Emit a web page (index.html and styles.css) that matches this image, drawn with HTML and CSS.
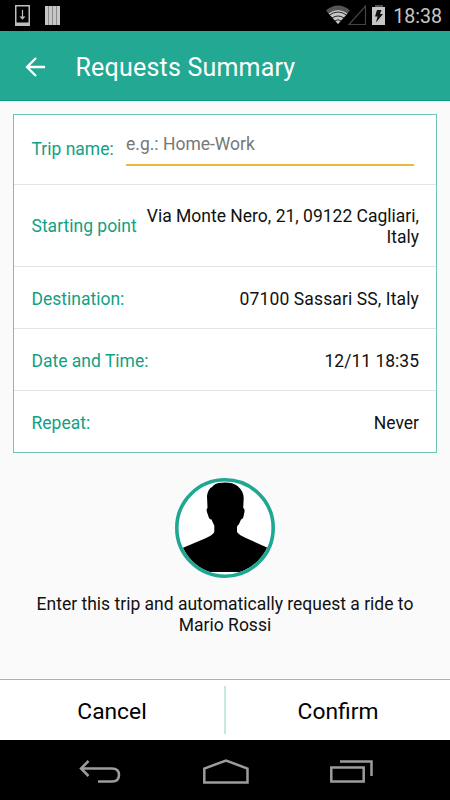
FILE: index.html
```
<!DOCTYPE html>
<html lang="en">
<head>
  <meta charset="UTF-8">
  <meta name="viewport" content="width=device-width, initial-scale=1.0">
  <title>Requests Summary</title>
  <link rel="stylesheet" href="styles.css">
</head>
<body>
  <div class="status_bar">
    <svg class="status_left" width="46" height="21" viewBox="0 0 46 21">
      <path d="M.75.75h13.5v19H.75z" fill="none" stroke="#bdbdbd" stroke-width="1.5"/>
      <path d="M0 17.500h15V21H0z" fill="#bdbdbd"/>
      <path d="M7.500 5v7" stroke="#bdbdbd" stroke-width="1.2"/>
      <path d="M4.500 11.500h6l-3 3.200z" fill="#bdbdbd"/>
      <path d="M30 1h15v19H30z" fill="#8a8a8a"/>
      <path d="M30 1h3v19h-3zM34 1h3v19h-3zM38 1h3v19h-3zM42 1h3v19h-3z" fill="#c6c6c6"/>
    </svg>
    <svg class="status_right" width="60" height="21" viewBox="0 0 60 21">
      <path d="M0 5.500Q12-4.500 24 5.500L12 19z" fill="#555"/>
      <path d="M2.500 8.500Q12 1.500 21.500 8.500L12 19z" fill="#c6c6c6"/>
      <path d="M3.500 10Q12 4 20.500 10M6 13Q12 9 18 13M8.500 16Q12 13.500 15.500 16" fill="none" stroke="#000" stroke-width=".8"/>
      <path d="M23 19.500L39.500 1v18.500z" fill="none" stroke="#444" stroke-width="1.200"/>
      <path d="M49 0h8v2h-8z" fill="#505050"/>
      <path d="M46 2h13v18H46z" fill="#c6c6c6"/>
      <path d="M51 5h4.500l-1.500 4h3l-7 8.500 1.500-6H49z" fill="#111"/>
    </svg>
    <span class="status_time">18:38</span>
  </div>

  <div class="header">
    <svg class="header_back" width="22" height="20" viewBox="0 0 22 20">
      <path d="M20 10H2M11 1L2 10l9 9" fill="none" stroke="#fff" stroke-width="2.300"/>
    </svg>
    <h1 class="header_title">Requests Summary</h1>
  </div>

  <div class="content">
    <div class="card">
      <div class="row row_name">
        <label class="row_label" for="trip">Trip name:</label>
        <input class="row_input" id="trip" type="text" placeholder="e.g.: Home-Work">
      </div>
      <div class="row row_start">
        <span class="row_label">Starting point</span>
        <span class="row_value">Via Monte Nero, 21, 09122 Cagliari, Italy</span>
      </div>
      <div class="row">
        <span class="row_label">Destination:</span>
        <span class="row_value row_value_wide">07100 Sassari SS, Italy</span>
      </div>
      <div class="row">
        <span class="row_label">Date and Time:</span>
        <span class="row_value">12/11 18:35</span>
      </div>
      <div class="row">
        <span class="row_label">Repeat:</span>
        <span class="row_value">Never</span>
      </div>
    </div>

    <svg class="avatar" width="100" height="100" viewBox="0 0 100 100">
      <clipPath id="circle"><circle cx="50" cy="50" r="46.500"/></clipPath>
      <circle cx="50" cy="50" r="48.200" fill="#fff"/>
      <path clip-path="url(#circle)" d="M0 94V73L8.700 69.500 30 60.500Q38 57 39.300 54V47.500Q38 45 36.500 41.500 34 41.500 33 37 30.500 31 32.500 30L32 18Q33 11 37 9 40 4.800 47 4.700 57 4 62.500 8 68.500 13 68.700 20L68.200 30Q70.500 31 69 36 68.500 41 66 41.500 64.500 46 62 48.500V54Q64 57 72 60.500L92 69.500 100 73V94z" fill="#000"/>
      <circle cx="50" cy="50" r="48.200" fill="none" stroke="#1fa792" stroke-width="3.600"/>
    </svg>
    <p class="message">Enter this trip and automatically request a ride to<br>Mario Rossi</p>
  </div>

  <div class="actions">
    <button class="actions_btn">Cancel</button>
    <div class="actions_divider"></div>
    <button class="actions_btn">Confirm</button>
  </div>

  <div class="nav_bar">
    <svg width="42" height="23" viewBox="0 0 42 23">
      <path d="M2 8.500h31q7 0 7 6.500t-7 6.500H19M9.500 1L2 8.500 9.500 16" fill="none" stroke="#9c9c9c" stroke-width="2.500"/>
    </svg>
    <svg width="46" height="25" viewBox="0 0 46 25">
      <path d="M1.300 23.500V9.500L23 1.500l21.500 8v14z" fill="none" stroke="#9c9c9c" stroke-width="2.500"/>
    </svg>
    <svg width="43" height="23" viewBox="0 0 43 23">
      <path d="M1.300 7.500h32.400v14H1.300zM10 1.500h31.500V16" fill="none" stroke="#9c9c9c" stroke-width="2.500"/>
    </svg>
  </div>
</body>
</html>
```

FILE: styles.css
```
* {
  box-sizing: border-box;
}
body {
  display: flex;
  flex-direction: column;
  margin: 0;
  height: 800px;
  font-family: Roboto, "Liberation Sans", sans-serif;
  font-size: 17.5px;
  line-height: 21px;
  color: #111;
  background-color: #fafafa;
}
.status_bar {
  display: flex;
  align-items: flex-start;
  height: 31px;
  padding: 5px 8px 0 15px;
  background-color: #000;
}
.status_right {
  margin-left: auto;
}
.status_time {
  margin-left: 7px;
  font-size: 19.6px;
  line-height: 23px;
  color: #c6c6c6;
}
.header {
  display: flex;
  align-items: center;
  height: 70px;
  padding: 2px 0 0 25px;
  border-bottom: 1px solid #079c83;
  background-color: #22a893;
}
.header_title {
  margin: 2px 0 0 28.5px;
  font-size: 25px;
  font-weight: 400;
  line-height: 30px;
  letter-spacing: 0.2px;
  color: #fff;
}
.content {
  flex: 1;
  display: flex;
  flex-direction: column;
  align-items: center;
  padding-top: 13px;
}
.card {
  width: 424px;
  border: 1px solid #6cc5b5;
  background-color: #fff;
}
.row {
  display: flex;
  align-items: center;
  justify-content: space-between;
  height: 62px;
  padding: 3px 17px 0 17.5px;
  border-bottom: 1px solid #e4e4e4;
}
.row:last-child {
  height: 61px;
  border-bottom: 0;
}
.row_name {
  height: 70px;
  padding: 0 22px 0 17.5px;
}
.row_start {
  height: 82px;
  padding-top: 2px;
}
.row_label {
  flex: none;
  color: #12a085;
}
.row_value {
  text-align: right;
}
.row_value_wide {
  letter-spacing: 0.12px;
}
.row_start .row_value {
  width: 278px;
}
.row_input {
  width: 288px;
  height: 35px;
  margin-top: -2px;
  padding: 0 0 7px;
  border: 0;
  border-bottom: 2px solid #e9b93b;
  outline: 0;
  font: inherit;
  background: none;
}
.row_input::placeholder {
  color: #777;
  opacity: 1;
}
.avatar {
  flex: none;
  margin-top: 24.5px;
}
.message {
  margin: 16px 0 0;
  text-align: center;
}
.actions {
  display: flex;
  align-items: center;
  height: 61px;
  border-top: 1px solid #82c4b8;
  background-color: #fff;
}
.actions_btn {
  flex: 1;
  height: 100%;
  padding: 3px 0 0;
  border: 0;
  font: inherit;
  font-size: 22.8px;
  color: #000;
  background: none;
}
.actions_divider {
  width: 2px;
  height: 48px;
  background-color: #c8e8e2;
}
.nav_bar {
  display: flex;
  align-items: center;
  justify-content: space-between;
  height: 60px;
  padding: 2px 77px 0 79px;
  background-color: #000;
}
```
